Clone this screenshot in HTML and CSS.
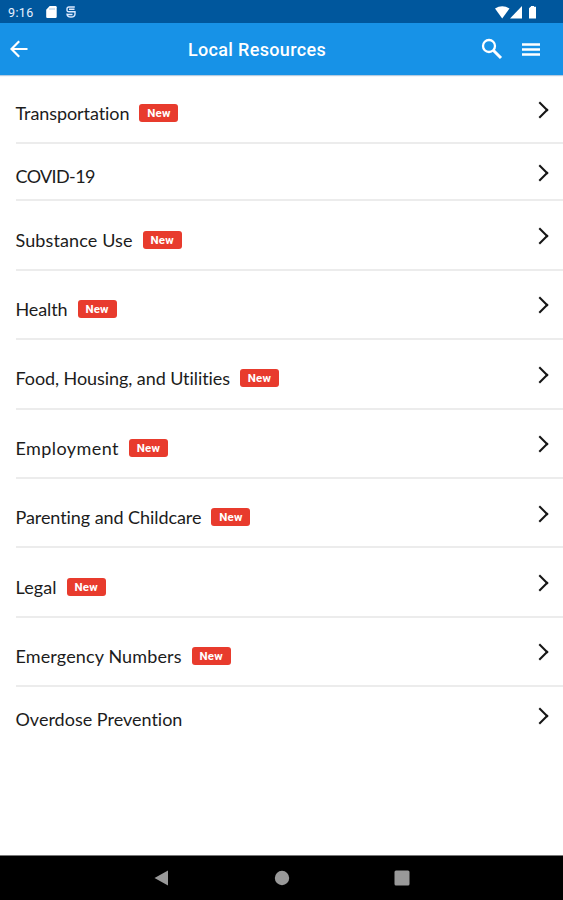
FILE: index.html
```
<!DOCTYPE html>
<html lang="en">
<head>
<meta charset="utf-8">
<title>Local Resources</title>
<link rel="stylesheet" href="styles.css">
</head>
<body>
<div class="status">
  <span class="time">9:16</span>
  <svg class="sd" viewBox="0 0 11 12" width="11" height="12"><path fill="#fff" d="M3.7 0H9.5Q10.7 0 10.7 1.2V10.8Q10.7 12 9.5 12H1.3Q.2 12 .2 10.8V3.8Z"/><path stroke="#8bb5dc" d="M4 2v2M6 2v2M8 2v2" stroke-width=".8"/></svg>
  <svg class="debug" viewBox="0 0 10 12" width="10" height="12"><path fill="none" stroke="#dceaff" stroke-width="1.4" d="M8.8 1H3Q1 1 1 3V4.5Q1 5.8 3 5.8H9V8Q9 11 5 11Q1 11 1 8V7.5M3 3.3H8.5M1 8.5H6.5"/></svg>
  <svg class="signals" viewBox="0 0 43 13" width="43" height="13" fill="#fff"><path d="M0 2.5Q7.2-2 14.5 2.5L7.2 12.4Z"/><path d="M27 0V12.4H15Z"/><path d="M35.5.8H36V0H39V.8H41V12.4H34V2.2Z"/></svg>
</div>
<header class="bar">
  <svg class="back" viewBox="0 0 18 18" width="18" height="18"><path fill="none" stroke="#fff" stroke-width="2.2" d="M17.5 9H2M9.2 1.2L1.5 9L9.2 16.8"/></svg>
  <h1>Local Resources</h1>
  <svg class="search" viewBox="0 0 22 22" width="22" height="22" fill="none" stroke="#fff"><circle cx="8" cy="8" r="6" stroke-width="2.3"/><path stroke-width="3" d="M12.5 12.5L20 20"/></svg>
  <svg class="menu" viewBox="0 0 18 13" width="18" height="13"><path stroke="#fff" stroke-width="2.4" d="M0 1.5H18M0 6.5H18M0 11.5H18"/></svg>
</header>
<main class="list">
  <div class="row transportation"><span class="label">Transportation</span><span class="badge">New</span><i class="chevron"></i></div>
  <div class="row small covid"><span class="label">COVID-19</span><i class="chevron"></i></div>
  <div class="row substance"><span class="label">Substance Use</span><span class="badge">New</span><i class="chevron"></i></div>
  <div class="row health"><span class="label">Health</span><span class="badge">New</span><i class="chevron"></i></div>
  <div class="row food"><span class="label">Food, Housing, and Utilities</span><span class="badge">New</span><i class="chevron"></i></div>
  <div class="row employment"><span class="label">Employment</span><span class="badge">New</span><i class="chevron"></i></div>
  <div class="row parenting"><span class="label">Parenting and Childcare</span><span class="badge">New</span><i class="chevron"></i></div>
  <div class="row legal"><span class="label">Legal</span><span class="badge">New</span><i class="chevron"></i></div>
  <div class="row emergency"><span class="label">Emergency Numbers</span><span class="badge">New</span><i class="chevron"></i></div>
  <div class="row small overdose"><span class="label">Overdose Prevention</span><i class="chevron"></i></div>
</main>
<nav class="nav">
  <svg viewBox="0 0 16 18" width="16" height="18"><path fill="#999" d="M14 1.5V16.5L.5 9Z"/></svg>
  <svg viewBox="0 0 16 16" width="16" height="16"><circle cx="8" cy="8" r="7.2" fill="#999"/></svg>
  <svg viewBox="0 0 16 16" width="16" height="16"><rect x=".5" y=".5" width="15" height="15" rx="1.5" fill="#999"/></svg>
</nav>
</body>
</html>
```
FILE: styles.css
```
* { box-sizing: border-box; }
body { margin: 0; height: 900px; overflow: hidden; display: flex; flex-direction: column; background: #fff; font-family: Roboto, sans-serif; }
svg { display: block; flex: none; }
.status { height: 23px; flex: none; background: #00579d; display: flex; align-items: center; padding: 1px 25px 0 8px; color: #e8f1ff; }
.time { width: 38px; font-size: 12.5px; letter-spacing: .4px; }
.debug { margin-left: 9px; }
.signals { margin-left: auto; }
.bar { height: 52px; flex: none; background: #1792e7; display: grid; grid-template-columns: 18px 1fr 22px 18px; align-items: center; padding: 0 23px 0 10px; box-shadow: 0 1px 1px #b5cbe0; position: relative; }
.bar h1 { margin: 1px 0 0 160px; font-size: 18px; line-height: 24px; font-weight: 500; letter-spacing: .33px; color: #fff; white-space: nowrap; }
.search { margin-left: -19px; }
.list { flex: 1; padding-top: .4px; font-family: Lato, sans-serif; }
.row { height: 69.4px; margin-left: 15.5px; padding: 9px 12px 0 0; border-bottom: 2px solid #ececec; display: flex; align-items: center; }
.small { height: 57px; }
.row:last-child { border-color: transparent; }
.label { font-size: 18px; line-height: 24px; color: #1c1c1c; white-space: nowrap; font-variant-ligatures: none; }
.badge { width: 39px; height: 18px; margin-left: 10px; border-radius: 3px; background: #e83b2d; color: #fff; font: 700 11.5px/18px Roboto, sans-serif; letter-spacing: .2px; text-align: center; }
.chevron { width: 12px; height: 12px; margin: -7px 5px 0 auto; border: solid #151515; border-width: 2px 2px 0 0; transform: rotate(45deg); }
.transportation { height: 69px; }
.transportation .label { letter-spacing: -.08px; }
.covid .label { letter-spacing: -.63px; }
.substance .label { letter-spacing: .12px; }
.health .label { letter-spacing: -.1px; }
.food .label { letter-spacing: -.08px; }
.employment .label { letter-spacing: .42px; }
.parenting .label { letter-spacing: -.07px; }
.legal .label { letter-spacing: .1px; }
.emergency .label { letter-spacing: .13px; }
.nav { height: 45px; flex: none; background: #000; border-top: 1px solid #777; display: flex; justify-content: center; align-items: center; gap: 104px; }
```
